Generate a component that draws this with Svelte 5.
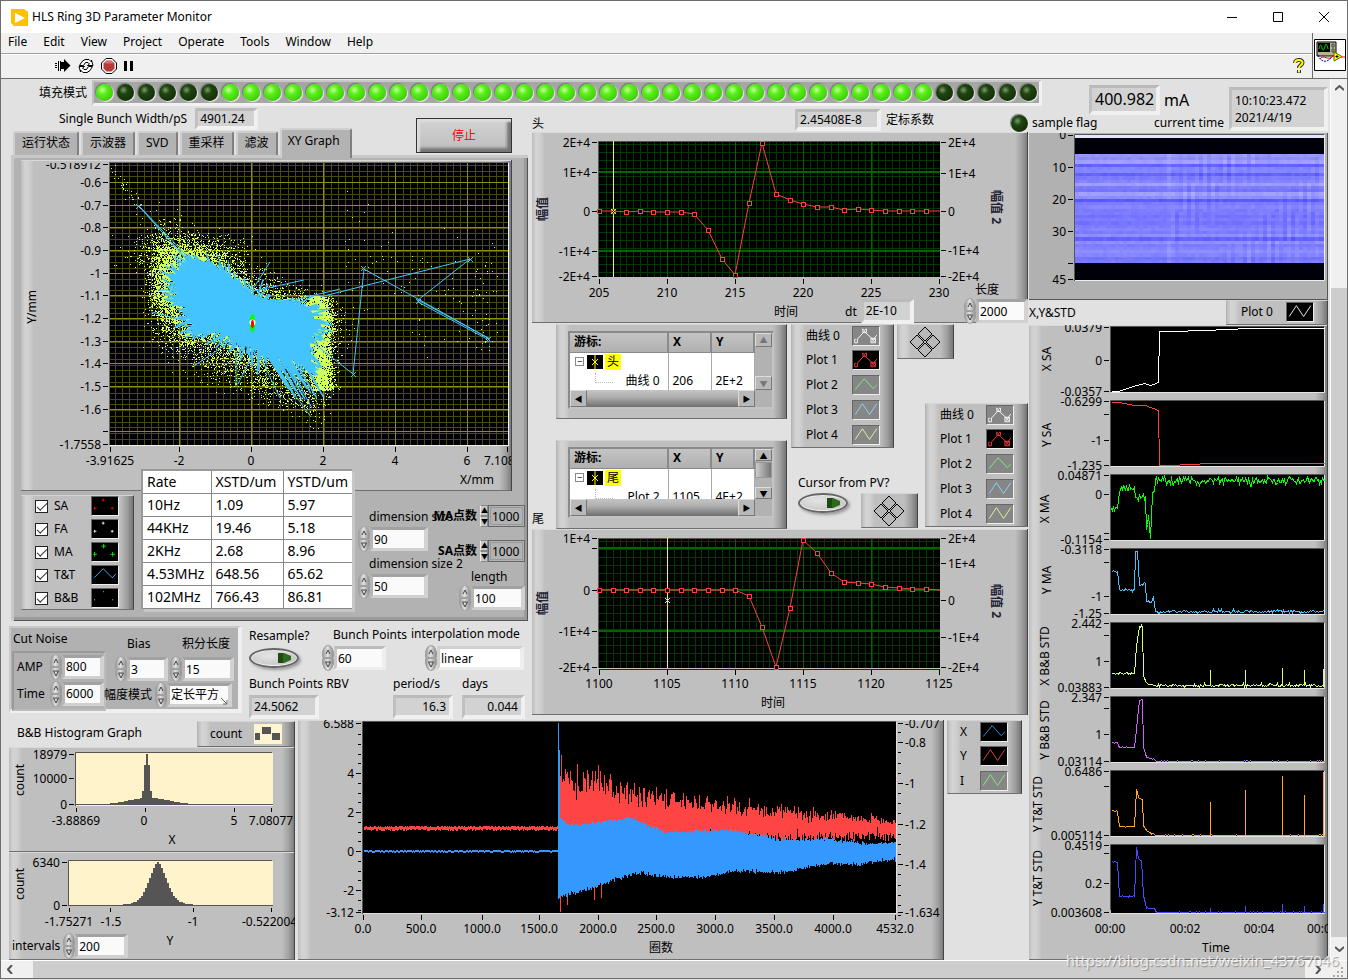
<script>
  // Deterministic noise so the traces look the same on every load.
  function rng(seed) {
    let s = seed;
    return () => {
      s = (s + 0x6d2b79f5) | 0;
      let t = Math.imul(s ^ (s >>> 15), 1 | s);
      t = (t + Math.imul(t ^ (t >>> 7), 61 | t)) ^ t;
      return ((t ^ (t >>> 14)) >>> 0) / 4294967296;
    };
  }
  const gauss = (r) => (r() + r() + r() + r() - 2) * 1.7;
  const range = (n) => Array.from({ length: n }, (_, i) => i);

  const menus = ['File', 'Edit', 'View', 'Project', 'Operate', 'Tools', 'Window', 'Help'];
  const tabs = ['运行状态', '示波器', 'SVD', '重采样', '滤波', 'XY Graph'];
  const leds = range(45).map((i) => i === 0 || (i > 5 && i < 40));

  const rates = [
    ['10Hz', '1.09', '5.97'],
    ['44KHz', '19.46', '5.18'],
    ['2KHz', '2.68', '8.96'],
    ['4.53MHz', '648.56', '65.62'],
    ['102MHz', '766.43', '86.81']
  ];

  const plotToggles = [
    { name: 'SA', color: '#f00', kind: 'plus' },
    { name: 'FA', color: '#fff', kind: 'plus' },
    { name: 'MA', color: '#0f0', kind: 'bigplus' },
    { name: 'T&T', color: '#4ac0ff', kind: 'line' },
    { name: 'B&B', color: '#d6ff70', kind: 'dot' }
  ];

  const curves = [
    { name: '曲线 0', color: '#fff', kind: 'square', on: false },
    { name: 'Plot 1', color: '#ff4040', kind: 'square', on: true },
    { name: 'Plot 2', color: '#80f080', kind: 'wave', on: false },
    { name: 'Plot 3', color: '#90d8ff', kind: 'zig', on: false },
    { name: 'Plot 4', color: '#e0ffa0', kind: 'zig', on: false }
  ];
  const waveCurves = [
    { name: 'X', color: '#3399ff', kind: 'wave', on: true },
    { name: 'Y', color: '#ff4040', kind: 'zig', on: true },
    { name: 'I', color: '#80f080', kind: 'zig', on: false }
  ];
  const plotZero = [{ name: 'Plot 0', color: '#fff', kind: 'zig', on: true }];

  // XY scatter
  const body = [
    [177, 272], [188, 262], [202, 262], [218, 270], [236, 280], [252, 294], [276, 302], [300, 306],
    [312, 312], [316, 325], [310, 342], [311, 368], [300, 362], [280, 356], [262, 350], [245, 346],
    [228, 336], [210, 330], [199, 331], [190, 320], [184, 306], [178, 296], [181, 284]
  ];
  const bodyPath = 'M' + body.map((p) => p.join(' ')).join('L') + 'Z';
  function edgePoint(r) {
    const k = Math.floor(r() * body.length);
    const a = body[k], b = body[(k + 1) % body.length], t = r();
    return [a[0] + (b[0] - a[0]) * t, a[1] + (b[1] - a[1]) * t];
  }
  function makeDots() {
    const r = rng(7);
    let d = '';
    const put = (x, y) => {
      if (x > 111 && x < 507 && y > 164 && y < 444) d += `M${Math.round(x)} ${Math.round(y)}.5h1`;
    };
    for (let i = 0; i < 6000; i++) {
      const [x, y] = edgePoint(r);
      const g = Math.abs(gauss(r)) * 14;
      const a = Math.atan2(y - 312, x - 246) + (r() - 0.5) * 0.9;
      put(x + Math.cos(a) * g, y + Math.sin(a) * g);
    }
    for (let i = 0; i < 3300; i++) {
      const y = 296 + r() * 94;
      put(320 + gauss(r) * 6 + (y - 345) * 0.06, y);
    }
    for (let i = 0; i < 1500; i++) put(166 + gauss(r) * 9, 284 + gauss(r) * 28);
    for (let i = 0; i < 900; i++) put(190 + gauss(r) * 28, 252 + gauss(r) * 10);
    for (let i = 0; i < 1100; i++) { const t = r(); put(180 + t * 140 + gauss(r) * 7, 342 + t * 58 + gauss(r) * 13); }
    for (let i = 0; i < 90; i++) { const t = r(); put(345 + t * 145, 245 + t * 70 + gauss(r) * 28); }
    for (let i = 0; i < 45; i++) put(484 + gauss(r) * 8, 240 + r() * 120);
    for (let i = 0; i < 40; i++) { const t = r(); put(111 + t * 35, 165 + t * 55 + gauss(r) * 8); }
    return d;
  }
  function makeSpikes() {
    const r = rng(21);
    let d = '';
    for (let i = 0; i < 480; i++) {
      const [x, y] = edgePoint(r);
      const g = Math.abs(gauss(r)) * 9;
      const a = Math.atan2(y - 312, x - 246) + (r() - 0.5) * 0.7;
      d += `M${(x - Math.cos(a) * 9).toFixed(1)} ${(y - Math.sin(a) * 9).toFixed(1)}L${(x + Math.cos(a) * g).toFixed(1)} ${(y + Math.sin(a) * g).toFixed(1)}`;
    }
    for (let i = 0; i < 22; i++) {
      const x = 262 + r() * 36, l = 20 + r() * 30;
      d += `M${x} 350l${l * 0.6} ${l}`;
    }
    return d;
  }
  const dots = makeDots();
  const spikes = makeSpikes();
  const outliers =
    'M139 206L200 275L139 206L185 254M165 236L200 272M320 297L470 259L418 300L490 339L364 269L353 374L316 345' +
    'M418 302L487 339M246 300L270 262M254 291L304 280M286 302L340 289M152 312L190 322M194 366L225 345M236 387L236 350M238 384L250 360M280 398L258 352M311 417L262 350M312 408L280 350M217 254L225 275M228 260L232 285';

  // Pulse graphs
  const headY = [211, 211, 212, 211, 212, 212, 212, 214, 230, 259, 275, 203, 143, 194, 200, 204, 207, 207, 210, 209, 210, 211, 211, 211, 211, 211];
  const tailY = [590, 590, 590, 590, 590, 590, 590, 590, 590, 590, 590, 596, 627, 667, 608, 540, 553, 573, 582, 583, 584, 587, 588, 589, 589, 590];
  const pts = (ys) => ys.map((y, i) => [Math.round(599 + i * 13.62), y]);
  const headGraph = {
    id: 'head', x0: 599, y0: 141, h: 136, pts: pts(headY), labelY: 297, x: ['205', '210', '215', '220', '225', '230'],
    left: [[142, '2E+4'], [172, '1E+4'], [211, '0'], [251, '-1E+4'], [276, '-2E+4']],
    right: [[142, '2E+4'], [173, '1E+4'], [211, '0'], [250, '-1E+4'], [276, '-2E+4']],
    major: [172, 251], cursor: 613, mark: 211, box: '532 132 496 191', axisY: 209, time: [786, 316]
  };
  const tailGraph = {
    id: 'tail', x0: 599, y0: 538, h: 130, pts: pts(tailY), labelY: 688, x: ['1100', '1105', '1110', '1115', '1120', '1125'],
    left: [[538, '1E+4'], [548, ''], [590, '0'], [631, '-1E+4'], [667, '-2E+4']],
    right: [[538, '2E+4'], [563, '1E+4'], [600, '0'], [637, '-1E+4'], [667, '-2E+4']],
    major: [548, 590, 631], cursor: 667, mark: 600, box: '532 529 496 186', axisY: 603, time: [773, 707]
  };

  // Turn-by-turn waveform
  function makeWave() {
    const r = rng(3);
    let red = '', blue = '';
    const lerp = (tbl, x) => {
      for (let i = 1; i < tbl.length; i++)
        if (x <= tbl[i][0]) {
          const [a, b] = [tbl[i - 1], tbl[i]];
          return a[1] + ((b[1] - a[1]) * (x - a[0])) / (b[0] - a[0]);
        }
      return tbl[tbl.length - 1][1];
    };
    const redTop = [[558, 776], [590, 782], [630, 793], [680, 802], [740, 808], [800, 814], [860, 819], [896, 822]];
    const blueTop = [[558, 817], [570, 826], [600, 822], [630, 818], [665, 832], [700, 831], [730, 830], [780, 840], [830, 839], [870, 844], [896, 842]];
    const blueBot = [[558, 897], [575, 893], [600, 885], [635, 873], [665, 877], [700, 878], [735, 871], [780, 872], [830, 863], [860, 864], [896, 859]];
    for (let x = 364; x < 896; x++) {
      if (x < 558) {
        red += `M${x}.5 ${826 + Math.floor(r() * 2)}v${3 + Math.floor(r() * 2)}`;
        blue += `M${x}.5 ${850 + (r() > 0.7 ? 1 : 0)}v2`;
      } else {
        const k = (896 - x) / 338;
        const top = lerp(redTop, x) + gauss(r) * (2 + 6 * k) - (r() > 0.94 ? 8 * k : 0);
        red += `M${x}.5 ${top.toFixed(0)}V${(840 - 4 * (1 - k) + gauss(r) * 3).toFixed(0)}`;
        blue += `M${x}.5 ${(lerp(blueTop, x) + gauss(r)).toFixed(0)}V${(lerp(blueBot, x) + gauss(r) * 1.2).toFixed(0)}`;
      }
    }
    red += 'M560.5 880V912M594.5 880V900M561.5 755V830M601.5 880V898M567.5 890V905M598.5 765V800';
    blue += 'M558.5 723V890M559.5 750V897';
    return { red, blue };
  }
  const wave = makeWave();
  const waveLeft = [[723, '6.588'], [773, '4'], [812, '2'], [851, '0'], [890, '-2'], [912, '-3.12']];
  const waveRight = [[723, '-0.707'], [742, '-0.8'], [783, '-1'], [824, '-1.2'], [864, '-1.4'], [912, '-1.634']];
  const waveX = [[363, '0.0'], [421, '500.0'], [482, '1000.0'], [539, '1500.0'], [598, '2000.0'], [656, '2500.0'], [715, '3000.0'], [774, '3500.0'], [833, '4000.0'], [895, '4532.0']];

  // Strip charts
  const spikesAt = (ys) => [1210, 1245, 1282, 1304, 1323].map((x, i) => [x, ys[i]]);
  const strips = [
    { name: 'X SA', cx: 1047, cy: 359, top: 327, color: '#fff', noise: 0, t: [[327, '0.0379'], [360, '0'], [391, '-0.0357']],
      p: [[1111, 391], [1118, 391], [1133, 386], [1144, 383], [1150, 385], [1158, 382], [1159, 331], [1215, 330], [1216, 329], [1258, 328], [1324, 328]] },
    { name: 'Y SA', cx: 1047, cy: 435, top: 401, color: '#ff4040', noise: 0, t: [[401, '-0.6299'], [414, ''], [440, '-1'], [465, '-1.235']],
      p: [[1111, 402], [1119, 402], [1134, 405], [1145, 405], [1158, 410], [1159, 465], [1179, 465], [1180, 464], [1218, 463], [1290, 463], [1324, 463]] },
    { name: 'X MA', cx: 1045, cy: 509, top: 475, color: '#0f0', noise: 2.4, t: [[475, '0.04871'], [494, '0'], [533, ''], [539, '-0.1154']],
      p: [[1111, 508], [1117, 508], [1120, 489], [1134, 487], [1135, 497], [1145, 496], [1146, 529], [1148, 515], [1149, 526], [1150, 538], [1152, 493], [1154, 491], [1155, 480], [1324, 480]] },
    { name: 'Y MA', cx: 1047, cy: 580, top: 549, color: '#4ac0ff', noise: 0.8, t: [[549, '-0.3118'], [562, ''], [596, '-1'], [613, '-1.25']],
      p: [[1111, 571], [1117, 571], [1119, 589], [1134, 589], [1135, 551], [1137, 551], [1139, 585], [1145, 583], [1146, 601], [1150, 602], [1153, 597], [1155, 611], [1324, 611]] },
    { name: 'X B&B STD', cx: 1045, cy: 656, top: 623, color: '#d6ff70', noise: 0.8, t: [[623, '2.442'], [635, ''], [661, '1'], [687, '0.03883']],
      p: [[1111, 673], [1134, 673], [1136, 646], [1139, 626], [1142, 627], [1143, 676], [1147, 683], [1155, 685], [1324, 685]], s: spikesAt([669, 669, 667, 669, 668]) },
    { name: 'Y B&B STD', cx: 1045, cy: 730, top: 697, color: '#d060ff', noise: 0.4, t: [[697, '2.347'], [708, ''], [734, '1'], [761, '0.03114']],
      p: [[1111, 742], [1117, 742], [1119, 747], [1134, 747], [1137, 719], [1139, 700], [1142, 699], [1143, 747], [1146, 757], [1154, 759], [1156, 761], [1324, 761]] },
    { name: 'Y T&T STD', cx: 1038, cy: 804, top: 771, color: '#ffa818', noise: 0.4, t: [[771, '0.6486'], [786, ''], [835, '0.005114']],
      p: [[1111, 810], [1117, 811], [1119, 826], [1134, 826], [1136, 789], [1138, 797], [1142, 799], [1143, 825], [1147, 831], [1154, 834], [1156, 835], [1324, 835]], s: spikesAt([801, 789, 775, 794, 771]) },
    { name: 'Y T&T STD', cx: 1038, cy: 878, top: 845, color: '#4848ff', noise: 0.4, t: [[845, '0.4519'], [853, ''], [883, '0.2'], [912, '0.003608']],
      p: [[1111, 861], [1117, 862], [1119, 896], [1134, 896], [1136, 847], [1138, 858], [1141, 860], [1143, 895], [1146, 908], [1154, 908], [1156, 912], [1324, 912]], s: spikesAt([907, 905, 903, 905, 903]) }
  ];
  function trace(s, k) {
    const r = rng(k + 40);
    const out = [];
    const bot = s.top + (k === 7 ? 67 : 64);
    for (let i = 0; i < s.p.length - 1; i++) {
      const [x0, y0] = s.p[i], [x1, y1] = s.p[i + 1];
      out.push([x0, y0]);
      for (let x = x0 + 1; x < x1; x++) {
        const sp = (s.s || []).find((q) => q[0] === x);
        let y = y0 + ((y1 - y0) * (x - x0)) / (x1 - x0) + gauss(r) * s.noise;
        if (s.name === 'X MA' && x > 1145 && x < 1151) y += gauss(r) * 6;
        y = Math.max(s.top + 1, Math.min(bot, y));
        out.push([x, Math.round(y)]);
        if (sp) out.push([x, sp[1]], [x, Math.round(y)]);
      }
    }
    out.push(s.p[s.p.length - 1]);
    return out.map((q) => `${q[0]}.5,${q[1]}.5`).join(' ');
  }
  const traces = strips.map(trace);

  // Bunch intensity map, 34 filled rows
  const shade = [7, 6, 8, 1, 5, 5, 1, 4, 5, 8, 4, 3, 8, 6, 0, 4, 5, 4, 4, 3, 4, 3, 4, 5, 4, 6, 1, 6, 4, 5, 6, 5, 3, 4];
  function makeCells() {
    const r = rng(99);
    const out = [];
    for (let j = 0; j < 34; j++)
      for (let i = 0; i < 62; i++) {
        const ripple = i > 22 ? Math.sin(i * 2.6 + Math.floor(j / 9)) * 13 * (0.5 + 0.5 * Math.sin(i * 0.2 + j * 0.16)) : 0;
        const v = Math.round(90 + shade[j] * 8.5 + ripple + (i === 23 ? 14 : 0) + (r() - 0.5) * 12);
        out.push({ x: 1075 + i * 4, y: 154 + Math.round(j * 3.206), w: i === 61 ? 5 : 4, c: `rgb(${v},${v},255)` });
      }
    return out;
  }
  const cells = makeCells();

  // Histograms
  const histX = range(98).map((i) => {
    const x = 76 + i * 2;
    const wide = 7 * Math.exp(-((x - 148) ** 2) / (2 * 22 ** 2));
    const narrow = 56 * Math.exp(-((x - 146) ** 2) / (2 * 2.4 ** 2));
    return [x, Math.min(51, Math.round(Math.max(wide, narrow)))];
  });
  const histY = range(101).map((i) => {
    const x = 69 + i * 2;
    const core = 32 * Math.exp(-((x - 157) ** 2) / (2 * 8.5 ** 2));
    const tail = 12 * Math.exp(-Math.abs(x - 157) / 17);
    return [x, Math.round(core + tail)];
  });
</script>

{#snippet swatch(c)}
  <svg class="swatch" class:dim={c.on === false} width="28" height="20" viewBox="0 0 28 20" aria-hidden="true">
    {#if c.kind === 'plus'}
      <path d="M12 2v3M10.500 3.500h3M2.500 11v3M1.500 12.500h3M22 11v3M20.500 12.500h3" stroke={c.color} fill="none" />
    {:else if c.kind === 'bigplus'}
      <path d="M12.500 1v5M10 3.500h5M2.500 10v5M1 12.500h4M22.500 10v5M20 12.500h5" stroke={c.color} fill="none" />
    {:else if c.kind === 'dot'}
      <path d="M12 3h1M2 12h1M22 12h1" stroke={c.color} />
    {:else if c.kind === 'line'}
      <path d="M2 13L12 3L22 13L26 9" stroke={c.color} fill="none" />
    {:else if c.kind === 'wave'}
      <path d="M2 15L12 3L22 14L26 10" stroke={c.color} fill="none" />
    {:else if c.kind === 'zig'}
      <path d="M2 15L10 3L18 15L26 3" stroke={c.color} fill="none" />
    {:else}
      <path d="M4 14L12 5L22 14L26 9M2.500 13.500h-1v4h3v-4M10.500 2v4h4V2M10 2l2 2 2-2M19.500 12.500h5v5h-5zM20 13l4 4M24 13l-4 4" stroke={c.color} fill="none" />
    {/if}
  </svg>
{/snippet}

{#snippet legend(list)}
  <ul class="legend raised">
    {#each list as c}
      <li><span>{c.name}</span>{@render swatch(c)}</li>
    {/each}
  </ul>
{/snippet}

{#snippet spin(id, value, label)}
  <span class="spin">
    <span class="steps">
      <button type="button" aria-label="Increase {label}"><svg viewBox="0 0 12 13"><path d="M4 9L6 5L8 9" /></svg></button>
      <button type="button" aria-label="Decrease {label}"><svg viewBox="0 0 12 13"><path d="M3.500 4h5L6 9z" /></svg></button>
    </span>
    <input {id} type="text" {value} />
  </span>
{/snippet}

{#snippet classicSpin(id, value, label)}
  <label class="bold" for={id}>{label}</label>
  <span class="classic">
    <span>
      <button type="button" aria-label="Increase {label}">▲</button>
      <button type="button" aria-label="Decrease {label}">▼</button>
    </span>
    <input {id} type="text" {value} />
  </span>
{/snippet}

{#snippet toggle(label)}
  <button type="button" class="toggle" aria-label={label}>
    <svg viewBox="0 0 14 10" width="14" height="10"><path d="M0 0h6l7 3v4l-7 3H0z" fill="#2f6a1c" /><path d="M0 0h5v10H0z" fill="#1f4a12" /></svg>
  </button>
{/snippet}

{#snippet diamond(label)}
  <button type="button" class="diamond raised" aria-label={label}>
    <svg width="32" height="32" viewBox="0 0 32 32">
      <g fill="#b8b8b8" stroke="#000">
        <path d="M16 1l7 7-7 7-7-7zM16 17l7 7-7 7-7-7zM8 9l7 7-7 7-7-7zM24 9l7 7-7 7-7-7z" />
      </g>
    </svg>
  </button>
{/snippet}

{#snippet cursorBox(mark, name, x, y, live)}
  <div class="cursor raised">
    <div class="cursor-in">
      <div class="rows">
        <table>
          <thead><tr><th>游标:</th><th>X</th><th>Y</th></tr></thead>
          <tbody>
            <tr>
              <td><span class="node"><i class="fold">−</i><svg width="16" height="14" viewBox="0 0 16 14"><path d="M0 0h16v14H0z" /><path d="M8 0v14M5 4l6 6M11 4l-6 6" stroke="#ff0" /></svg><mark>{mark}</mark></span></td>
              <td></td><td></td>
            </tr>
            <tr><td class="leaf"><span>{name}</span></td><td>{x}</td><td>{y}</td></tr>
          </tbody>
        </table>
      </div>
      <div class="vbar" class:live>
        <button type="button" aria-label="Scroll up">▲</button>
        {#if live}<i></i>{/if}
        <button type="button" aria-label="Scroll down">▼</button>
      </div>
      <div class="hbar">
        <button type="button" aria-label="Scroll left">◀</button><i></i><button type="button" aria-label="Scroll right">▶</button>
      </div>
    </div>
  </div>
{/snippet}

{#snippet pulse(g)}
  <svg class="chart raised" viewBox={g.box} role="img" aria-label="{g.id} pulse">
    <rect x={g.x0} y={g.y0} width="341" height={g.h} fill="#000" />
    <g shape-rendering="crispEdges">
      {#each range(49) as i}
        <path d="M{Math.round(g.x0 + 7 + i * 6.81)}.5 {g.y0}v{g.h}" stroke="#003a00" />
      {/each}
      {#each range(17) as i}
        <path d="M{g.x0} {g.y0 + 3 + i * 8}.5h341" stroke="#003a00" />
      {/each}
      {#each [1, 2, 3, 4] as i}
        <path d="M{g.x0 + i * 68}.5 {g.y0}v{g.h}" stroke="#006400" />
      {/each}
      {#each g.major as y}
        <path d="M{g.x0} {y}h341" stroke="#006400" stroke-width="2" />
      {/each}
      <path d="M{g.x0 - 0.5} {g.y0 + g.h}v-{g.h}h341" fill="none" stroke="#555" />
      <path d="M{g.cursor}.5 {g.y0}v{g.h}" stroke="#ff0" />
    </g>
    <polyline points={g.pts.map((p) => p.join(',')).join(' ')} fill="none" stroke="#ff4040" />
    {#each g.pts.slice(0, 25) as p}
      <rect x={p[0] - 1.5} y={p[1] - 1.5} width="4" height="4" fill="#000" stroke="#ff4040" />
    {/each}
    <path d="M{g.cursor - 2} {g.mark - 2}l5 5m0-5l-5 5" stroke="#ff0" fill="none" />
    {#each g.left as [y, t]}
      <path d="M592 {y}.5h5" stroke="#000" /><text x="590" y={y + 5} text-anchor="end">{t}</text>
    {/each}
    {#each g.right as [y, t]}
      <path d="M941 {y}.5h5" stroke="#000" /><text x="948" y={y + 5}>{t}</text>
    {/each}
    {#each g.x as t, i}
      <path d="M{599 + i * 68}.5 {g.y0 + g.h + 2}v5" stroke="#000" /><text x={599 + i * 68} y={g.labelY} text-anchor="middle">{t}</text>
    {/each}
    <text transform="translate(547 {g.axisY}) rotate(-90)" text-anchor="middle" font-weight="bold">幅值</text>
    <text transform="translate(992 {g.axisY - 2}) rotate(90)" text-anchor="middle" font-weight="bold">幅值 2</text>
    <text x={g.time[0]} y={g.time[1]} text-anchor="middle">时间</text>
  </svg>
{/snippet}

<div class="window">
  <header class="title">
    <svg width="17" height="17" viewBox="0 0 17 17"><path d="M0 0h13l4 3v14H3l-3-3z" fill="#ffc000" /><path d="M4 4l10 5-10 5z" fill="#fff" /></svg>
    <h1>HLS Ring 3D Parameter Monitor</h1>
    <div class="sys">
      <button type="button" aria-label="Minimize"><svg width="11" height="11"><path d="M0 5.500h10" stroke="#000" /></svg></button>
      <button type="button" aria-label="Maximize"><svg width="11" height="11"><path d="M.5.5h9v9h-9z" fill="none" stroke="#000" /></svg></button>
      <button type="button" aria-label="Close"><svg width="11" height="11"><path d="M0 0l10 10M10 0L0 10" stroke="#000" /></svg></button>
    </div>
  </header>

  <div class="bars">
    <div class="barcol">
      <nav>{#each menus as m}<button type="button">{m}</button>{/each}</nav>
      <div class="tools">
        <button type="button" aria-label="Run"><svg width="16" height="14" viewBox="0 0 16 14"><path d="M5 3h4V0l6.500 6.500L9 13v-3H5z" fill="#000" /><path d="M0 4.500h2M0 6.500h2M0 8.500h2M3.500 2v10M5.500 2v10" stroke="#000" /></svg></button>
        <button type="button" aria-label="Run continuously"><svg width="16" height="14" viewBox="0 0 16 14"><path d="M1.500 6.500L4 2.500L7 .5h4L13.500 3V1L15 6.500H9.500L11.500 5L10 3.500H7.500L5.500 6.500zM14.500 7.500L12 11.500L9 13.500H5L2.500 11v2L1 7.500h5.500L4.500 9L6 10.500h2.500L10.500 7.500z" fill="#fff" stroke="#000" /></svg></button>
        <button type="button" aria-label="Abort"><svg width="16" height="16" viewBox="0 0 16 16"><path d="M5 .5h6L15.500 5v6L11 15.500H5L.5 11V5z" fill="#fff" stroke="#000" /><path d="M5.500 2.500h5l3 3v5l-3 3h-5l-3-3v-5z" fill="#b83a3a" /><path d="M5.500 3h5l2 2.500h-9z" fill="#d87070" /></svg></button>
        <button type="button" aria-label="Pause"><svg width="10" height="10"><path d="M0 0h3v10H0zM6 0h3v10H6z" /></svg></button>
        <button type="button" class="help" aria-label="Context help"><svg width="12" height="16" viewBox="0 0 12 16"><path d="M2 5C2 1 9.500 1 9.500 4.500C9.500 7.500 6 7 6 10M6 12v3" fill="none" stroke="#333" stroke-width="4" /><path d="M2 5C2 1 9.500 1 9.500 4.500C9.500 7.500 6 7 6 10M6 12v2.500" fill="none" stroke="#ff0" stroke-width="2" /></svg></button>
      </div>
    </div>
    <div class="vi">
      <svg width="32" height="32" viewBox="0 0 32 32"><path d="M.5.500h31v31H.5z" fill="#fff" stroke="#000" /><path d="M3 3h19v14H3z" fill="#b8b490" stroke="#000" /><path d="M4 4h12v9H4z" /><path d="M5 10c1-5 2-5 3-1s2 2 3-2 2-1 3 3" fill="none" stroke="#0c0" /><path d="M18 5h2v3h-2zM18 10h2v3h-2z" fill="none" stroke="#444" /><path d="M4 16c3 8 9 8 14 2" fill="none" stroke="#00c" stroke-dasharray="2 1" /><path d="M6 20c4-6 8 4 14-4M27 18h4" fill="none" stroke="#e00" /><path d="M20 13l8 4.500-8 4.500z" fill="#ff0" stroke="#660" /><path d="M21.500 17.500h3M23 16v3" stroke="#000" /></svg>
    </div>
  </div>

  <div class="stage">
    <main>
      <div class="leftmid">
        <section class="fill">
          <span>填充模式</span>
          <div class="leds">{#each leds as on}<i class="led" class:on></i>{/each}</div>
        </section>

        <div class="upper">
          <section class="left">
            <div class="lefthead">
              <div class="headcol">
                <div class="bunch"><span>Single Bunch Width/pS</span><output class="read">4901.24</output></div>
                <div class="tabs" role="tablist">
                  {#each tabs as t, i}<button type="button" role="tab" class:active={i === 5}>{t}</button>{/each}
                </div>
              </div>
              <button type="button" class="stop">停止</button>
            </div>

            <div class="tabpanel">
              <svg class="chart raised" viewBox="21 160 491 331" role="img" aria-label="XY graph">
                <defs><clipPath id="xyclip"><path d="M21 163h490v328H21z" /></clipPath></defs>
                <path d="M110 163h398v282H110z" />
                <g shape-rendering="crispEdges">
                  {#each range(55) as i}<path d="M{Math.round(115 + i * 7.19)}.5 163v282" stroke="#4a4a0c" />{/each}
                  {#each range(49) as i}<path d="M110 {Math.round(165 + i * 5.7)}.5h398" stroke="#4a4a0c" />{/each}
                  {#each [179, 251, 323, 395, 467] as x}<path d="M{x}.5 163v282" stroke="#8f8f00" />{/each}
                  {#each range(12) as i}<path d="M110 {Math.round(182 + i * 22.68)}.5h398" stroke="#8f8f00" />{/each}
                  <path d="M109.500 445V162.500H508" fill="none" stroke="#666" /><path d="M508.500 163v282.500H110" fill="none" stroke="#eee" />
                  <path d={dots} stroke="#d0ff60" />
                </g>
                <path d={bodyPath} fill="#44c4ff" />
                <path d={spikes} stroke="#44c4ff" stroke-width="1.500" />
                <path d={outliers} stroke="#44c4ff" fill="none" />
                <path d="M361 266l5 5m0-5l-5 5M468 257l5 5m0-5l-5 5M416 299l5 5m0-5l-5 5M486 337l5 5m0-5l-5 5M351 372l5 5m0-5l-5 5M136 204l5 5m0-5l-5 5" stroke="#44c4ff" />
                <ellipse cx="252.500" cy="323" rx="3" ry="9" fill="#0f0" /><ellipse cx="252.500" cy="322.500" rx="3" ry="3" fill="#fff" /><ellipse cx="252.500" cy="324" rx="1.500" ry="4" fill="#f00" />
                <g clip-path="url(#xyclip)">
                  <text x="101" y="169" text-anchor="end">-0.518912</text>
                  <text x="460" y="484">X/mm</text>
                  <text x="484" y="465">7.1087</text>
                </g>
                {#each range(12) as i}
                  <path d="M103 {Math.round(182 + i * 22.68)}.5h5" stroke="#000" />
                  {#if i < 11}<text x="101" y={Math.round(187 + i * 22.68)} text-anchor="end">{i === 4 ? '-1' : '-' + (0.6 + i * 0.1).toFixed(1)}</text>{/if}
                {/each}
                <path d="M103 164.500h5M103 444.500h5M110.500 447v5M179.500 447v5M251.500 447v5M323.500 447v5M395.500 447v5M467.500 447v5M507.500 447v5" stroke="#000" />
                <text x="101" y="449" text-anchor="end">-1.7558</text>
                <text x="110" y="465" text-anchor="middle">-3.91625</text>
                <text x="179" y="465" text-anchor="middle">-2</text>
                <text x="251" y="465" text-anchor="middle">0</text>
                <text x="323" y="465" text-anchor="middle">2</text>
                <text x="395" y="465" text-anchor="middle">4</text>
                <text x="467" y="465" text-anchor="middle">6</text>
                <text transform="translate(36 307) rotate(-90)" text-anchor="middle">Y/mm</text>
              </svg>

              <div class="under">
                <ul class="checks raised">
                  {#each plotToggles as p}
                    <li><label><input type="checkbox" checked />{p.name}</label>{@render swatch(p)}</li>
                  {/each}
                </ul>
                <table class="rates">
                  <thead><tr><th>Rate</th><th>XSTD/um</th><th>YSTD/um</th></tr></thead>
                  <tbody>{#each rates as r}<tr>{#each r as c}<td>{c}</td>{/each}</tr>{/each}</tbody>
                </table>
                <div class="dims">
                  <label for="dim1">dimension size</label>{@render spin('dim1', '90', 'dimension size')}
                  <label for="dim2">dimension size 2</label>{@render spin('dim2', '50', 'dimension size 2')}
                </div>
                <div class="counts">
                  <div>{@render classicSpin('ma', '1000', 'MA点数')}</div>
                  <div>{@render classicSpin('sa', '1000', 'SA点数')}</div>
                  <label for="len">length</label>{@render spin('len', '100', 'length')}
                </div>
              </div>
            </div>

            <div class="params">
              <fieldset class="noise">
                <div class="ncol">
                  <span class="ntitle">Cut Noise</span>
                  <div class="inner">
                    <div><label for="amp">AMP</label>{@render spin('amp', '800', 'AMP')}</div>
                    <div><label for="time">Time</label>{@render spin('time', '6000', 'Time')}</div>
                  </div>
                </div>
                <div class="nright">
                  <div class="ntop">
                    <div><label for="bias">Bias</label>{@render spin('bias', '3', 'Bias')}</div>
                    <div><label for="integ">积分长度</label>{@render spin('integ', '15', '积分长度')}</div>
                  </div>
                  <div class="mode">
                    <label for="mode">幅度模式</label>
                    <span class="spin">
                      <span class="steps">
                        <button type="button" aria-label="Previous mode"><svg viewBox="0 0 12 13"><path d="M4 9L6 5L8 9" /></svg></button>
                        <button type="button" aria-label="Next mode"><svg viewBox="0 0 12 13"><path d="M3.500 4h5L6 9z" /></svg></button>
                      </span>
                      <select id="mode"><option>定长平方</option></select>
                      <svg class="corner" width="7" height="7" viewBox="0 0 7 7"><path d="M0 0l6 6M6 2v4H2" fill="none" stroke="#666" /></svg>
                    </span>
                  </div>
                </div>
              </fieldset>
              <div class="resample">
                <div class="r1"><span class="cap">Resample?</span>{@render toggle('Resample?')}</div>
                <div class="r2"><label for="bp">Bunch Points</label>{@render spin('bp', '60', 'Bunch Points')}</div>
                <div class="r3"><label for="interp">interpolation mode</label>{@render spin('interp', 'linear', 'interpolation mode')}</div>
                <div class="r4"><span class="cap">Bunch Points RBV</span><output class="read">24.5062</output></div>
                <div class="r5"><span class="cap">period/s</span><output class="read">16.3</output></div>
                <div class="r6"><span class="cap">days</span><output class="read">0.044</output></div>
              </div>
            </div>
          </section>

          <section class="mid">
            <div class="midhead"><span class="cap">头</span><output class="read">2.45408E-8</output><span>定标系数</span></div>
            {@render pulse(headGraph)}
            <div class="dt">
              <span>dt</span><output class="read">2E-10</output>
              <div class="lenbox"><label for="total">长度</label>{@render spin('total', '2000', '长度')}</div>
            </div>

            <div class="cursors">
              <div class="curcol">
                {@render cursorBox('头', '曲线 0', '206', '2E+2', false)}
                {@render cursorBox('尾', 'Plot 2', '1105', '4E+2', true)}
              </div>
              <div class="curright">
                <div class="cr1">{@render legend(curves)}{@render diamond('Pan head cursor')}</div>
                <div class="cr2">
                  <div class="pv">
                    <span>Cursor from PV?</span>
                    <div>{@render toggle('Cursor from PV?')}{@render diamond('Pan tail cursor')}</div>
                  </div>
                  {@render legend(curves)}
                </div>
              </div>
            </div>
            <span class="tailcap">尾</span>
            {@render pulse(tailGraph)}
          </section>
        </div>

        <div class="lower">
          <section class="hists">
            <div class="histhead">
              <span>B&amp;B Histogram Graph</span>
              <div class="countkey raised"><span>count</span>
                <svg width="28" height="20" viewBox="0 0 28 20"><path d="M0 0h28v20H0z" fill="#fff5d0" /><path d="M1 9h5v7H1zM8 3h9v7H8zM18 9h8v7h-8z" fill="#555" /></svg>
              </div>
            </div>
            <svg class="chart raised" viewBox="9 747 286 105" role="img" aria-label="X histogram">
              <path d="M76 753h197v53H76z" fill="#fff3cc" /><path d="M75.500 806V752.500H272" fill="none" stroke="#555" />
              {#each histX as [x, h]}<rect {x} y={805 - h} width="2" height={h} fill="#555" />{/each}
              <path d="M76 804.500h197" stroke="#555" />
              <path d="M69 754.500h5M69 778.500h5M69 804.500h5M76.500 808v4M145.500 808v4M234.500 808v4M271.500 808v4" stroke="#000" />
              <text x="67" y="759" text-anchor="end">18979</text><text x="67" y="783" text-anchor="end">10000</text><text x="67" y="809" text-anchor="end">0</text>
              <text x="76" y="825" text-anchor="middle">-3.88869</text><text x="144" y="825" text-anchor="middle">0</text><text x="234" y="825" text-anchor="middle">5</text><text x="271" y="825" text-anchor="middle">7.08077</text>
              <text x="172" y="844" text-anchor="middle">X</text>
              <text transform="translate(24 780) rotate(-90)" text-anchor="middle">count</text>
            </svg>
            <svg class="chart raised" viewBox="9 852 286 108" role="img" aria-label="Y histogram">
              <path d="M69 861h204v45H69z" fill="#fff3cc" /><path d="M68.500 906V860.500H272" fill="none" stroke="#555" />
              {#each histY as [x, h]}<rect {x} y={906 - h} width="2" height={h} fill="#555" />{/each}
              <path d="M69 905.500h204" stroke="#555" />
              <path d="M62 862.500h5M62 905.500h5M69.500 908v4M110.500 908v4M193.500 908v4M271.500 908v4" stroke="#000" />
              <text x="60" y="867" text-anchor="end">6340</text><text x="60" y="910" text-anchor="end">0</text>
              <text x="69" y="926" text-anchor="middle">-1.75271</text><text x="111" y="926" text-anchor="middle">-1.5</text><text x="193" y="926" text-anchor="middle">-1</text><text x="242" y="926">-0.522004</text>
              <text x="170" y="945" text-anchor="middle">Y</text>
              <text transform="translate(24 884) rotate(-90)" text-anchor="middle">count</text>
            </svg>
            <div class="intervals"><label for="intervals">intervals</label>{@render spin('intervals', '200', 'intervals')}</div>
          </section>

          <section class="wavebox">
            <svg class="chart raised" viewBox="298 720 646 240" role="img" aria-label="Turn by turn waveform">
              <path d="M363 722h533v191H363z" />
              <path d="M362.500 914V721.500H896" fill="none" stroke="#555" /><path d="M363 913.500h533.500V722" fill="none" stroke="#ddd" />
              <g shape-rendering="crispEdges"><path d={wave.red} stroke="#ff4444" /><path d={wave.blue} stroke="#3399ff" /></g>
              {#each waveLeft as [y, t]}<path d="M356 {y}.5h5" stroke="#000" /><text x="354" y={y + 5} text-anchor="end">{t}</text>{/each}
              {#each waveRight as [y, t]}<path d="M898 {y}.5h5" stroke="#000" /><text x="905" y={y + 5}>{t}</text>{/each}
              {#each range(19) as i}<path d="M358 {Math.round(734 + i * 9.75)}.5h3M898 {Math.round(732 + i * 10.17)}.5h3" stroke="#000" />{/each}
              {#each waveX as [x, t]}<path d="M{x}.5 915v5" stroke="#000" /><text x={x} y="933" text-anchor="middle">{t}</text>{/each}
              <text x="661" y="952" text-anchor="middle">圈数</text>
            </svg>
          </section>

          <section class="wavekey">{@render legend(waveCurves)}</section>
        </div>
      </div>

      <div class="right">
        <div class="status">
          <div class="srow"><output class="read big">400.982</output><span class="unit">mA</span></div>
          <div class="srow2"><i class="led"></i><span>sample flag</span><span class="ct">current time</span></div>
          <output class="read stamp">10:10:23.472<br />2021/4/19</output>
        </div>
        <svg class="chart flat" viewBox="1029 133 299 167" role="img" aria-label="Bunch intensity">
          <path d="M1075 135h249v145h-249z" fill="#000008" />
          <path d="M1075 135h249v3h-249z" fill="#e4e4ff" />
          <g shape-rendering="crispEdges">{#each cells as c}<rect x={c.x} y={c.y} width={c.w} height="4" fill={c.c} />{/each}<path d="M1075 263h249v17h-249z" fill="#000008" /></g>
          <path d="M1074.500 281V134.500H1324" fill="none" stroke="#555" /><path d="M1075 280.500h249.500V135" fill="none" stroke="#eee" />
          <path d="M1068 135.500h5M1068 167.500h5M1068 199.500h5M1068 231.500h5M1068 263.500h5M1068 279.500h5" stroke="#000" />
          <text x="1066" y="139" text-anchor="end">0</text><text x="1066" y="172" text-anchor="end">10</text><text x="1066" y="204" text-anchor="end">20</text><text x="1066" y="236" text-anchor="end">30</text><text x="1066" y="284" text-anchor="end">45</text>
        </svg>
        <div class="striphead"><span>X,Y&amp;STD</span>{@render legend(plotZero)}</div>
        <svg class="chart raised" viewBox="1029 325 299 635" role="img" aria-label="Trend strips">
          {#each strips as s, k}
            <rect x="1111" y={s.top} width="213" height={k === 7 ? 68 : 65} fill="#000" />
            <path d="M1110.500 {s.top + 65}V{s.top - 0.5}H1324" fill="none" stroke="#555" />
            <path d="M1111 {s.top + (k === 7 ? 68.5 : 65.5)}h213.500V{s.top}" fill="none" stroke="#e4e4e4" />
            <polyline points={traces[k]} fill="none" stroke={s.color} shape-rendering="crispEdges" />
            {#each s.t as [y, t]}<path d="M1104 {y}.5h5" stroke="#000" /><text x="1102" y={y + 5} text-anchor="end">{t}</text>{/each}
            <text transform="translate({s.cx + 4} {s.cy}) rotate(-90)" text-anchor="middle">{s.name}</text>
          {/each}
          <text x="1110" y="933" text-anchor="middle">00:00</text><text x="1185" y="933" text-anchor="middle">00:02</text><text x="1259" y="933" text-anchor="middle">00:04</text><text x="1307" y="933">00:06</text>
          <text x="1216" y="952" text-anchor="middle">Time</text>
        </svg>
      </div>
    </main>

    <div class="vscroll"><button type="button" aria-label="Scroll page up"><svg width="9" height="6"><path d="M0 5l4.500-4L9 5" /></svg></button><i></i><button type="button" aria-label="Scroll page down"><svg width="9" height="6"><path d="M0 1l4.500 4L9 1" /></svg></button></div>
  </div>
  <footer class="hscroll">
    <button type="button" aria-label="Scroll page left"><svg width="6" height="9"><path d="M5 0L1 4.500L5 9" /></svg></button><i></i><button type="button" aria-label="Scroll page right"><svg width="6" height="9"><path d="M1 0l4 4.500L1 9" /></svg></button>
    <svg class="grip" width="17" height="17"><path d="M11 6h2v2h-2zM11 10h2v2h-2zM7 10h2v2H7zM11 14h2v2h-2zM7 14h2v2H7zM3 14h2v2H3z" fill="#aaa" /></svg>
  </footer>
  <span class="credit">https://blog.csdn.net/weixin_43767046</span>
</div>

<style>
  :global(body) { margin: 0; background: #e1e1e1; }
  .window, .window :global(*) { box-sizing: border-box; }
  .window { position: relative; border: 1px solid #6d6d6d; background: #e1e1e1; font: 12px/16px "Noto Sans", "Noto Sans CJK SC", sans-serif; color: #000; overflow: hidden; min-width: 1100px; }
  button, input, select { font: inherit; color: inherit; margin: 0; padding: 0; border: 0; background: none; border-radius: 0; }
  ul { list-style: none; margin: 0; padding: 0; }
  span, label { white-space: nowrap; }
  svg { display: block; flex: none; }
  svg text { font: 12px "Noto Sans", "Noto Sans CJK SC", sans-serif; }
  svg text[font-weight="bold"] { font-weight: 700; fill: #223; }

  .title { display: flex; align-items: center; height: 32px; padding-left: 10px; gap: 4px; background: #fff; }
  h1 { margin: 0; flex: 1; font-size: 12px; font-weight: 400; }
  .sys { display: flex; align-self: stretch; }
  .sys button { width: 46px; display: grid; place-items: center; }
  .bars { display: flex; background: #f0f0f0; height: 46px; border-bottom: 1px solid #6d6d6d; }
  .barcol { flex: 1; }
  nav { display: flex; height: 21px; gap: 16px; padding: 0 0 2px 7px; border-bottom: 1px solid #a0a0a0; }
  .tools { display: flex; align-items: center; height: 24px; padding: 0 7px 2px 54px; gap: 7px; border-top: 1px solid #fff; }
  .tools .help { margin-left: auto; }
  .vi { width: 35px; border-left: 1px solid #6d6d6d; padding: 6px 1px; }

  .stage { display: flex; }
  main { flex: 1; min-width: 0; display: grid; grid-template-columns: minmax(0, 1027fr) minmax(0, 302fr); }
  .raised { border: 1px solid; border-color: #d4d4d4 #444 #707070 #b4b4b4; background: linear-gradient(to right, #bcbcbc, #d4d4d4 4px, #d0d0d0 8px, #bfbfbf 13px, #bfbfbf calc(100% - 13px), #a0a0a0 calc(100% - 6px), #757575); }
  .chart { width: 100%; height: auto; overflow: hidden; border: 0; }
  .chart.raised { box-shadow: inset -1px 0 #444, inset 0 -1px #707070, inset 0 1px #d8d8d8; }
  .flat { background: #b1b1b1; box-shadow: inset -1px -1px #555; }

  .fill { display: flex; height: 28px; padding-left: 38px; align-items: center; gap: 5px; }
  .leds { display: flex; margin-right: -16px; border: solid; border-width: 2px 3px 3px 2px; border-color: #c8c8c8 #f2f2f2 #f2f2f2 #c0c0c0; background: #a6a6a6; }
  .led { width: 17px; height: 17px; margin: 2px; flex: none; border-radius: 50%; background: radial-gradient(circle at 38% 35%, #7a9c6a, #1e4410 28%, #143008 75%); box-shadow: 1px 1px 1px 0 #f0f0f0, -1px -1px 1px #777; }
  .led.on { background: radial-gradient(circle at 38% 35%, #c8ff9c, #58f018 30%, #3cc808 80%); }

  .upper { display: grid; grid-template-columns: minmax(0, 530fr) minmax(0, 497fr); }
  .read { display: block; background: #d2d2d2; border: solid; border-width: 3px 4px 4px 3px; border-color: #bababa #f0f0f0 #f0f0f0 #c0c0c0; padding-left: 2px; line-height: 15px; white-space: nowrap; }
  .lefthead { display: flex; justify-content: space-between; height: 48px; padding-left: 10px; }
  .bunch { display: flex; gap: 8px; padding-left: 48px; height: 20px; align-items: flex-start; }
  .bunch span { line-height: 24px; }
  .bunch .read { width: 63px; margin-top: 1px; }
  .tabs { display: flex; align-items: flex-end; height: 28px; padding-left: 2px; position: relative; gap: 2px; }
  .tabs button { height: 24px; padding: 0 7px 2px; background: #b3b3b3; border: solid; border-width: 2px 2px 0 2px; border-color: #d0d0d0 #808080 #b0b0b0 #cfcfcf; border-radius: 2px 2px 0 0; white-space: nowrap; }
  .tabs .active { height: 30px; margin-bottom: -3px; padding: 0 10px 6px 6px; }
  .stop { width: 96px; height: 35px; margin: 11px 19px 0 0; border: 1px solid #333; color: #f00; background: linear-gradient(#d2d2d2, #bdbdbd); box-shadow: inset 3px 3px 2px #dcdcdc, inset -4px -4px 3px #757575; }

  .tabpanel { margin: 0 3px 0 10px; padding: 5px 16px 0 10px; height: 466px; background: #b2b2b2; box-shadow: inset 3px 3px 0 #c8c8c8, inset -1px -1px #555, inset -4px -4px 1px #999; }
  .under { display: grid; grid-template-columns: 119px 218px 72px 1fr; margin: -20px -11px 0 0; position: relative; align-items: start; }
  .checks { width: 113px; height: 115px; margin-top: 24px; padding: 0 0 0 13px; }
  .checks li { display: flex; height: 23px; align-items: center; justify-content: space-between; padding: 0 14px 3px 0; }
  .checks label { display: flex; align-items: center; gap: 6px; }
  .checks input { appearance: none; width: 13px; height: 13px; border: 1px solid #222; background: #fff; position: relative; }
  .checks input::after { content: ""; position: absolute; left: 1px; top: 2px; width: 9px; height: 4px; border: solid #333; border-width: 0 0 1px 1px; transform: rotate(-45deg); }
  .swatch { background: #000; border: 1px solid; border-color: #666 #eee #eee #666; }
  .swatch.dim { background: #868686; }
  .rates { border-collapse: collapse; background: #fff; font-size: 14px; border: 2px solid #999; border-width: 2px 0 0 2px; margin: -2px 0 0 1px; width: 211px; table-layout: fixed; box-shadow: 3px 3px #c6c6c6; }
  .rates th, .rates td { height: 23px; padding: 0 0 0 4px; font-weight: 400; text-align: left; border: 1px solid #888; border-width: 0 0 1px 1px; white-space: nowrap; line-height: 16px; }
  .rates th:first-child { width: 69px; }
  .rates th:nth-child(2) { width: 72px; }

  .spin { display: flex; align-items: center; position: relative; }
  .steps { display: flex; flex-direction: column; width: 12px; height: 26px; flex: none; }
  .steps button { height: 13px; background: linear-gradient(to right, #8e8e8e, #e2e2e2 45%, #808080); border-radius: 50% 50% 2px 2px / 80% 80% 2px 2px; box-shadow: inset 0 0 0 1px #a0a0a0; }
  .steps button:last-child { border-radius: 2px 2px 50% 50% / 2px 2px 80% 80%; }
  .steps svg { width: 12px; height: 13px; }
  .steps path { fill: none; stroke: #444; }
  .spin input, .spin select { flex: 1; min-width: 0; width: 48px; height: 24px; background: #fafafa; border: solid; border-width: 3px 4px 3px 3px; border-color: #a2a2a2 #d2d2d2 #d0d0d0 #b6b6b6; padding-left: 1px; }
  .spin select { appearance: none; }
  .corner { position: absolute; right: 4px; bottom: 3px; }
  .classic { display: flex; }
  .classic > span { display: flex; flex-direction: column; width: 8px; }
  .classic button { height: 11px; font-size: 7px; line-height: 10px; background: #c8c8c8; border: 1px solid #888; border-left-color: #eee; }
  .classic input { width: 37px; height: 22px; border: 1px solid #666; outline: 1px solid #999; outline-offset: -3px; background: #b2b2b2; padding-left: 3px; }
  .bold { font-weight: 700; }

  .dims { padding-top: 38px; width: 70px; }
  .dims label { display: block; padding-left: 11px; height: 18px; }
  .dims .spin { height: 29px; padding-bottom: 5px; }
  .counts { padding-top: 34px; }
  .counts > div { display: flex; gap: 3px; justify-content: flex-end; align-items: center; height: 22px; margin-bottom: 13px; }
  .counts > label { display: block; padding-left: 41px; height: 16px; margin-top: -6px; }
  .counts > .spin { width: 66px; margin-left: 29px; }

  .params { display: flex; height: 95px; padding: 5px 3px 0 8px; }
  .noise { display: flex; margin: 0; min-width: 0; width: 233px; height: 87px; padding: 2px 0 0 1px; background: #b1b1b1; border: solid; border-width: 2px 4px 4px 2px; border-color: #c8c8c8 #f0f0f0 #f0f0f0 #c8c8c8; }
  .ntitle { display: block; line-height: 18px; padding-left: 1px; margin-bottom: 3px; }
  .inner { width: 94px; height: 60px; border: 2px solid; border-color: #9a9a9a #bdbdbd #bdbdbd #9a9a9a; padding-left: 3px; }
  .inner > div { display: flex; align-items: center; justify-content: space-between; height: 27px; }
  .inner .spin { width: 54px; }
  .nright { margin-left: 2px; }
  .ntop { display: flex; gap: 2px; padding-left: 7px; }
  .ntop > div { width: 53px; }
  .ntop > div:last-child { width: 64px; }
  .ntop label { display: block; padding-left: 12px; line-height: 28px; height: 26px; }
  .mode { display: flex; gap: 3px; margin-left: -4px; align-items: center; }
  .mode .spin { width: 77px; }

  .resample { flex: 1; display: grid; grid-template-columns: 73px 74px 15px 1fr; grid-template-rows: 50px 40px; margin-left: 7px; }
  .resample .cap, .resample label { display: block; }
  .r1 .cap { line-height: 20px; height: 22px; }
  .r2 { grid-column: 2; }
  .r2 label { padding-left: 11px; line-height: 18px; height: 19px; }
  .r2 .spin { width: 64px; }
  .r3 { grid-column: 4; }
  .r3 label { line-height: 16px; height: 19px; }
  .r3 .spin { width: 99px; margin-left: 14px; }
  .r3 .spin :global(input) { background: #fff; border-color: #d0d0d0 #eee #eee #d0d0d0; }
  .r2 .spin :global(input) { border-color: #bbb #eee #eee #c8c8c8; }
  .r4 { grid-column: 1; grid-row: 2; }
  .resample .read { height: 24px; margin-top: 3px; line-height: 17px; }
  .r4 .read { width: 70px; }
  .r5 { grid-column: 2 / 4; grid-row: 2; padding-left: 71px; }
  .r5 .read { width: 60px; text-align: right; padding-right: 3px; }
  .r6 { grid-column: 4; grid-row: 2; padding-left: 51px; }
  .r6 .read { width: 63px; text-align: right; padding-right: 3px; }

  .toggle { display: flex; align-items: center; justify-content: flex-end; width: 50px; height: 20px; padding-right: 5px; border: 2px solid #666; border-radius: 50%; background: radial-gradient(ellipse at 40% 35%, #e4e4e4, #bcbcbc); box-shadow: 2px 2px 3px #999, inset 0 0 0 1px #eee; }

  .mid { display: flex; flex-direction: column; padding-left: 1px; }
  .midhead { display: flex; height: 25px; align-items: center; gap: 5px; }
  .midhead .cap { width: 258px; padding-top: 8px; }
  .midhead .read { width: 86px; }
  .dt { position: relative; display: flex; align-items: flex-end; height: 41px; margin-top: -40px; gap: 4px; padding-left: 313px; }
  .dt .read { width: 53px; height: 25px; line-height: 18px; }
  .dt > span { line-height: 24px; }
  .lenbox { margin-left: auto; width: 64px; }
  .lenbox label { display: block; padding-left: 11px; }
  .cursors { display: grid; grid-template-columns: 231px 1fr; height: 205px; padding-left: 24px; }
  .curcol { display: flex; flex-direction: column; justify-content: space-between; }
  .cursor { padding: 6px 12px 0 11px; height: 95px; }
  .cursor:last-child { height: 89px; }
  .cursor-in { display: grid; grid-template-columns: 1fr 17px; grid-template-rows: minmax(0, 1fr) 17px; height: 78px; border: 2px solid #999; border-color: #8a8a8a #c4c4c4 #c4c4c4 #8a8a8a; background: #b2b2b2; overflow: hidden; }
  .cursor:last-child .cursor-in { height: 71px; }
  .rows { overflow: hidden; background: #fff; }
  .rows table { border-collapse: collapse; width: 100%; table-layout: fixed; }
  .rows th { height: 19px; padding: 0 4px; text-align: left; font-weight: 700; border: 1px solid #8a8a8a; border-width: 0 2px 1px 0; background: linear-gradient(#c4c4c4, #b0b0b0); }
  .rows th:first-child { width: 98px; }
  .rows td { height: 19px; padding: 0 4px; border-right: 1px solid #aaa; }
  .node { display: flex; align-items: center; gap: 2px; padding-left: 1px; }
  .fold { width: 9px; height: 9px; border: 1px solid #888; font: 9px/7px "Noto Sans"; text-align: center; margin-right: 1px; }
  mark { background: #ff0; padding: 0 2px; }
  .rows .leaf { text-align: right; padding-right: 8px; }
  .leaf span { display: flex; justify-content: space-between; padding-left: 21px; }
  .leaf span::before { content: ""; width: 17px; height: 9px; border: dotted #bbb; border-width: 0 0 1px 1px; }
  .vbar { display: flex; flex-direction: column; justify-content: space-between; color: #777; }
  .vbar.live { color: #000; }
  .vbar button, .hbar button { width: 17px; height: 14px; font-size: 8px; line-height: 12px; background: #b8b8b8; border: 1px solid; border-color: #ddd #777 #777 #ddd; }
  .vbar button:last-child { line-height: 11px; }
  .vbar.live button { height: 12px; line-height: 9px; }
  .vbar i { height: 16px; margin-bottom: 8px; background: linear-gradient(to right, #ccc, #777); border: 1px solid #999; }
  .hbar { display: flex; grid-row: 2; background: #bbb; }
  .hbar button { height: 17px; line-height: 14px; }
  .hbar i { flex: 1; background: linear-gradient(#c4c4c4, #b0b0b0 40%, #6f6f6f); }
  .curright { display: flex; flex-direction: column; padding-left: 4px; }
  .cr1 { display: flex; gap: 3px; height: 124px; align-items: flex-start; }
  .cr2 { display: flex; justify-content: space-between; height: 81px; align-items: flex-start; }
  .cr2 > :global(.legend) { margin-top: -45px; }
  .pv > span { display: block; padding: 27px 0 2px 7px; }
  .pv > div { display: flex; gap: 13px; padding-left: 7px; }
  .legend { width: 103px; padding: 0 13px 0 14px; }
  .legend li { display: flex; align-items: center; justify-content: space-between; height: 25px; }
  .legend li:first-child { height: 22px; }
  .diamond { width: 57px; height: 35px; display: grid; place-items: center; flex: none; padding-right: 2px; }
  .tailcap { height: 16px; margin-top: -18px; margin-bottom: 2px; width: 20px; }

  .lower { display: grid; grid-template-columns: minmax(0, 288fr) minmax(0, 650fr) minmax(0, 81fr); padding: 4px 0 0 8px; }
  .hists { padding-right: 2px; }
  .histhead { display: flex; justify-content: space-between; height: 27px; align-items: flex-end; padding-left: 8px; }
  .histhead > span { line-height: 26px; padding-bottom: 1px; }
  .countkey { display: flex; width: 98px; height: 26px; align-items: center; justify-content: space-between; padding: 0 12px 0 12px; }
  .intervals { display: flex; align-items: center; position: relative; height: 26px; margin-top: -27px; padding-left: 3px; gap: 3px; }
  .intervals .spin { width: 65px; }
  .wavebox { padding: 0 3px 0 1px; }
  .wavekey .legend { width: 75px; padding: 0 13px 0 12px; }

  .status { display: grid; grid-template-columns: 199px 1fr; grid-template-rows: 34px 20px; height: 54px; }
  .srow { display: flex; align-items: center; gap: 4px; padding: 8px 0 0 61px; font-size: 16px; }
  .unit { font-size: 16px; }
  .big { width: 71px; height: 30px; font-size: 16px; line-height: 22px; padding-left: 3px; }
  .srow2 { display: flex; align-items: center; margin-left: -17px; grid-row: 2; white-space: nowrap; }
  .srow2 .led { margin: 0 4px 0 0; }
  .ct { margin-left: auto; padding-right: 3px; }
  .stamp { grid-column: 2; grid-row: 1 / 3; height: 44px; margin: 8px 2px 0 2px; line-height: 17px; padding: 2px 3px; }
  .right .chart { width: calc(100% - 3px); margin-left: 1px; }
  .striphead { display: flex; justify-content: space-between; align-items: center; height: 25px; padding: 0 2px 0 1px; }
  .striphead :global(.legend) { height: 25px; width: 102px; }

  .vscroll { width: 17px; background: #f0f0f0; border-left: 1px solid #fff; display: flex; flex-direction: column; }
  .vscroll i { flex: 1; margin-top: 192px; background: #cdcdcd; }
  .vscroll button { height: 17px; display: grid; place-items: center; }
  .vscroll button:last-child { height: 23px; }
  .hscroll { display: flex; height: 18px; border-top: 1px solid #fff; background: #f0f0f0; }
  .hscroll i { flex: 1; background: #cdcdcd; }
  .hscroll button { width: 17px; display: grid; place-items: center; }
  .hscroll button:first-child { margin-right: 15px; }
  .hscroll button:nth-of-type(2) { width: 25px; }
  .hscroll button path, .vscroll button path { fill: none; stroke: #555; stroke-width: 2; }
  .credit { position: absolute; right: 8px; bottom: 8px; font: 15px/20px "Noto Sans", sans-serif; color: rgba(255, 255, 255, 0.75); text-shadow: 1px 1px 1px rgba(90, 90, 90, 0.6); pointer-events: none; }
</style>
